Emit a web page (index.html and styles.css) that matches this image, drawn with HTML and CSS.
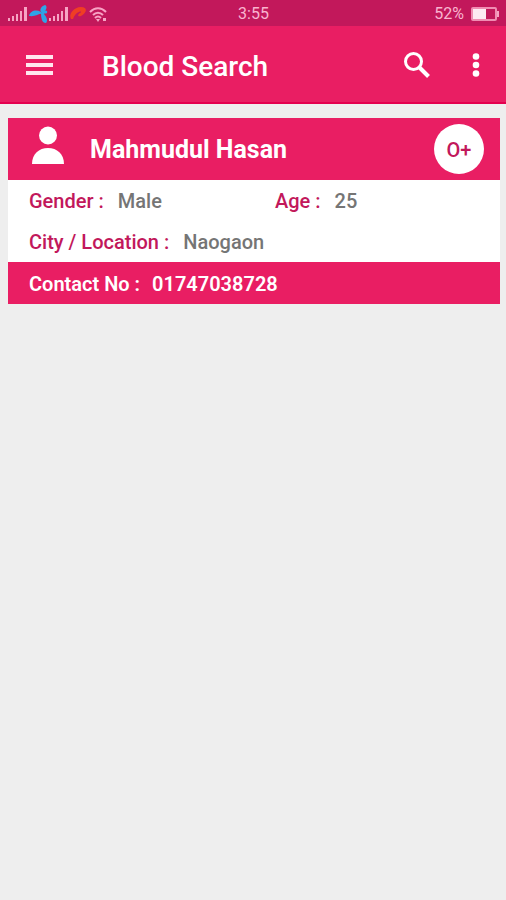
FILE: index.html
```html
<!DOCTYPE html>
<html lang="en">
<head>
<meta charset="utf-8">
<meta name="viewport" content="width=device-width, initial-scale=1">
<title>Blood Search</title>
<link rel="stylesheet" href="styles.css">
</head>
<body>
<div class="status">
  <svg class="signals" width="100" height="18" viewBox="0 0 100 18" aria-hidden="true">
    <g fill="#f7a3c4">
      <path d="M0 13h2v3H0zM4 11h2v5H4zM8 9h2v7H8zM12 6h2v10h-2zM16 2h3v14h-3z"/>
      <path d="M41 13h2v3h-2zM45 11h2v5h-2zM49 9h2v7h-2zM53 6h2v10h-2zM57 2h3v14h-3z"/>
    </g>
    <g fill="#2fa4e7">
      <path d="M21 11c1-5 7-7 12-4l2 2c-4-1-7 3-14 2z"/>
      <path d="M33 7c-2-3 1-6 4-7 3 1 1 6-2 8z"/>
      <path d="M34 7c4-3 6-1 5 1-1 1-3 0-3 1 3 3 4 7 2 9-4 0-5-5-5-10z"/>
    </g>
    <path d="M63 14c-3-5 3-12 10-12 7 0 6 6 0 9-3 1-4-1-1-3 2-1 1-2-1-1-3 1-5 4-6 7z" fill="#ef3e24"/>
    <g fill="none" stroke="#f7a3c4" stroke-width="2">
      <path d="M82 7c5-5 11-5 16 0M85 10c3-3 7-3 10 0M87 13c2-2 4-2 6 0"/>
    </g>
    <path d="M88 14h4l-2 3zM95 13h3v3h-3z" fill="#f7a3c4"/>
  </svg>
  <span class="clock">3:55</span>
  <span class="power">52%
    <svg width="28" height="14" viewBox="0 0 28 14" aria-hidden="true">
      <rect x="1" y="1" width="24" height="12" rx="1" fill="none" stroke="#f08db3" stroke-width="2"/>
      <path d="M2 2h13v10H2z" fill="#fdeaf2"/>
      <path d="M26 4h2v6h-2z" fill="#f7a3c4"/>
    </svg>
  </span>
</div>
<header class="appbar">
  <button class="icon-button" aria-label="Menu">
    <svg width="28" height="20" viewBox="0 0 28 20"><path d="M0 0h27v4H0zM0 8h27v4H0zM0 16h27v4H0z" fill="#ffe6ee"/></svg>
  </button>
  <h1 class="title">Blood Search</h1>
  <button class="icon-button" aria-label="Search">
    <svg width="26" height="26" viewBox="0 0 26 26" fill="none" stroke="#fff"><circle cx="9.5" cy="9.5" r="8" stroke-width="3"/><path d="M15 15l9.500 9.500" stroke-width="4"/></svg>
  </button>
  <button class="icon-button" aria-label="More options">
    <svg width="8" height="24" viewBox="0 0 8 24" fill="#fff"><circle cx="4" cy="3.5" r="3.3"/><circle cx="4" cy="12" r="3.3"/><circle cx="4" cy="20.5" r="3.3"/></svg>
  </button>
</header>
<main class="results">
  <article class="card">
    <div class="card-head">
      <svg class="avatar" width="32" height="38" viewBox="0 0 32 38" fill="#fff" aria-hidden="true"><circle cx="16" cy="9.5" r="9"/><path d="M0 38c0-10 7-16 16-16s16 6 16 16z"/></svg>
      <h2 class="name">Mahmudul Hasan</h2>
      <span class="group">O+</span>
    </div>
    <dl class="details">
      <div class="field"><dt>Gender :</dt><dd>Male</dd></div>
      <div class="field"><dt>Age :</dt><dd>25</dd></div>
      <div class="field wide"><dt>City / Location :</dt><dd>Naogaon</dd></div>
    </dl>
    <p class="contact"><span>Contact No :</span><a href="tel:01747038728">01747038728</a></p>
  </article>
</main>
</body>
</html>
```
FILE: styles.css
```css
* {
  box-sizing: border-box;
}

body {
  margin: 0;
  min-height: 100vh;
  background: #eee;
  font-family: Roboto, "Liberation Sans", sans-serif;
}

h1, h2, p, dl, dd {
  margin: 0;
}

svg {
  display: block;
  flex: none;
}

.status {
  display: grid;
  grid-template-columns: 1fr auto 1fr;
  align-items: center;
  height: 26px;
  padding: 1px 7px 0 8px;
  background: #c2185b;
  color: #f9b4cf;
  font-size: 16px;
}

.power {
  display: flex;
  align-items: center;
  justify-content: flex-end;
  gap: 7px;
}

.appbar {
  display: flex;
  align-items: center;
  height: 78px;
  padding: 2px 20px 0;
  background: #e91e63;
  border-bottom: 2px solid #e4004f;
  color: #fff;
}

.icon-button {
  display: flex;
  align-items: center;
  justify-content: center;
  min-width: 20px;
  height: 48px;
  margin: 0;
  padding: 0 6px;
  border: 0;
  background: none;
}

.title {
  flex: 1;
  padding: 4px 0 0 42px;
  font-size: 28px;
  font-weight: 500;
  line-height: 32px;
}

.title + .icon-button {
  margin-right: 30px;
}

.results {
  padding: 14px 6px 14px 8px;
}

.card {
  background: #fff;
}

.card-head {
  display: flex;
  align-items: center;
  height: 62px;
  padding: 0 16px 0 24px;
  background: #e91e63;
  color: #fff;
}

.avatar {
  margin-bottom: 8px;
}

.name {
  flex: 1;
  padding: 2px 0 0 26px;
  font-size: 25px;
  font-weight: 700;
  line-height: 32px;
}

.group {
  display: grid;
  place-items: center;
  width: 50px;
  height: 50px;
  padding-top: 2px;
  border-radius: 50%;
  background: #fff;
  color: #c2185b;
  font-size: 20px;
  font-weight: 500;
}

.details {
  display: grid;
  grid-template-columns: 1fr 1fr;
  padding-top: 1px;
  font-size: 20px;
  font-weight: 500;
  line-height: 41px;
}

.field {
  display: flex;
  gap: 14px;
  padding-left: 21px;
}

.wide {
  grid-column: 1 / -1;
  line-height: 40px;
}

.field dt {
  color: #c2185b;
}

.field dd {
  color: #757575;
}

.contact {
  display: flex;
  gap: 12px;
  padding: 2px 21px 0;
  background: #e91e63;
  color: #fff;
  font-size: 20px;
  font-weight: 600;
  line-height: 40px;
}

.contact a {
  color: inherit;
  text-decoration: none;
}
```
